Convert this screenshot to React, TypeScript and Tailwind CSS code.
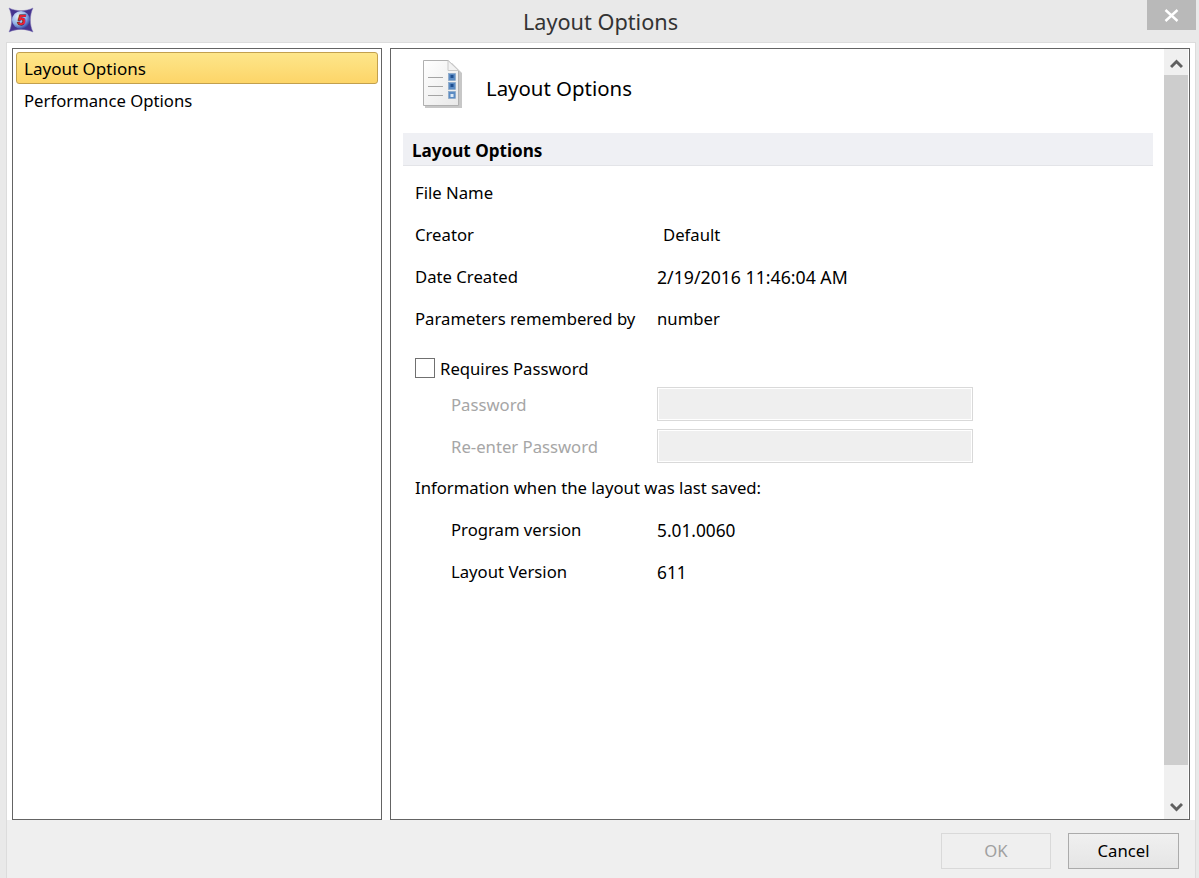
function Logo() {
  return (
    <svg width="26" height="26" viewBox="0 0 26 26" className="block">
      <defs>
        <radialGradient id="ball" cx="35%" cy="30%" r="75%">
          <stop offset="0%" stopColor="#e6eefa" />
          <stop offset="60%" stopColor="#8fb0e6" />
          <stop offset="100%" stopColor="#2f3a9c" />
        </radialGradient>
      </defs>
      <path d="M1 1 C8 4.5 18 4.5 25 1 C21.5 8 21.5 18 25 25 C18 21.5 8 21.5 1 25 C4.5 18 4.5 8 1 1Z" fill="#46348f" stroke="#7f74b4" strokeWidth="0.5" />
      <circle cx="13" cy="13" r="9" fill="url(#ball)" />
      <text x="13.5" y="18" textAnchor="middle" fontSize="14.5" fontWeight="700" fontStyle="italic" fill="#ea2230" stroke="#3a1028" strokeWidth="0.9" paintOrder="stroke" fontFamily="'Liberation Sans', sans-serif">5</text>
    </svg>
  );
}

function DocIcon() {
  return (
    <svg width="42" height="49" viewBox="0 0 42 49" className="block">
      <defs>
        <linearGradient id="page" x1="0" y1="0" x2="1" y2="1">
          <stop offset="0%" stopColor="#ffffff" />
          <stop offset="100%" stopColor="#e8e8e8" />
        </linearGradient>
      </defs>
      <path d="M3 3 H30 L40 13 V48 H3Z" fill="#b4b4b4" opacity="0.75" />
      <path d="M1.5 0.5 H26 L36.5 10.5 V45.5 H1.5Z" fill="url(#page)" stroke="#b0b0b0" />
      <path d="M26 0.5 V10.5 H36.5Z" fill="#f2f2f2" stroke="#c8c8c8" />
      <g stroke="#a4a4a4" strokeWidth="1">
        <line x1="6" y1="17.5" x2="21" y2="17.5" />
        <line x1="6" y1="26.5" x2="21" y2="26.5" />
        <line x1="6" y1="35.5" x2="21" y2="35.5" />
      </g>
      <g fill="#5c8cc4" stroke="#85a3c4" strokeWidth="0.6">
        <rect x="26.5" y="13.5" width="7" height="7" />
        <rect x="26.5" y="22.5" width="7" height="7" />
        <rect x="26.5" y="31.5" width="7" height="7" />
      </g>
      <g fill="#1f4f8f">
        <rect x="28.5" y="15" width="3" height="3" />
        <rect x="28.5" y="24" width="3" height="3" />
      </g>
      <rect x="28.5" y="34" width="3" height="3" fill="#dce8f4" />
    </svg>
  );
}

function CloseGlyph() {
  return (
    <svg width="15" height="13" viewBox="0 0 15 13" className="block">
      <path d="M1.5 1 L13.5 12 M13.5 1 L1.5 12" stroke="#ffffff" strokeWidth="2.4" fill="none" />
    </svg>
  );
}

function ScrollArrow({ up }: { up?: boolean }) {
  return (
    <svg width="13" height="10" viewBox="0 0 13 10" className="block">
      <path d={up ? "M1 8 L6.5 2.5 L12 8" : "M1 2 L6.5 7.5 L12 2"} stroke="#606060" strokeWidth="3" fill="none" />
    </svg>
  );
}

function Row({ label, value, indent, valueClass }: { label: string; value: string; indent?: boolean; valueClass?: string }) {
  return (
    <div className="flex h-[42px] items-center pt-[1px]">
      <div className={indent ? "w-[242px] pl-[36px]" : "w-[242px]"}>{label}</div>
      <div className={valueClass}>{value}</div>
    </div>
  );
}

function PasswordRow({ label }: { label: string }) {
  return (
    <div className="flex h-[42px] items-center text-[#a6a6a6]">
      <div className="w-[242px] pl-[36px] pt-[3px]">{label}</div>
      <div className="h-[34px] w-[316px] border border-[#d9d9d9] bg-white p-[1px]">
        <div className="h-full bg-[#efefef]"></div>
      </div>
    </div>
  );
}

export default function App() {
  return (
    <div className="flex h-[878px] w-[1199px] flex-col overflow-hidden bg-[#e9e9e9] font-['Noto_Sans',sans-serif] text-[16.7px] leading-none text-black">
      {/* title bar */}
      <div className="grid h-[42px] shrink-0 grid-cols-[1fr_auto_1fr]">
        <div className="pl-[8px] pt-[7px]">
          <Logo />
        </div>
        <div className="pl-[2px] pt-[11px] text-[21.7px] leading-[22px] text-[#333333]">Layout Options</div>
        <div className="flex justify-end pr-[3px]">
          <div className="flex h-[30px] w-[49px] items-center justify-center bg-[#b9b9b9]">
            <CloseGlyph />
          </div>
        </div>
      </div>

      <div className="ml-[6px] mr-[3px] flex flex-1 flex-col border-x border-t border-[#dcdcdc] bg-[#efefef]">
        <div className="flex h-[777px] gap-[8px] bg-white pl-[5px] pr-[5px] pt-[5px]">
          {/* left list */}
          <div className="w-[370px] border border-[#646464] p-[3px]">
            <div className="flex h-[32px] items-center rounded-[3px] border border-[#c2a04e] bg-gradient-to-b from-[#fde68a] to-[#fdd568] pl-[7px] pt-[2px] text-[17.05px]">
              Layout Options
            </div>
            <div className="flex h-[34px] items-center pl-[8px]">Performance Options</div>
          </div>

          {/* right pane */}
          <div className="flex w-[800px] border border-[#646464]">
            <div className="flex-1 pl-[12px] pr-[11px]">
              <div className="flex h-[84px] items-start pl-[19px] pt-[11px]">
                <DocIcon />
                <div className="ml-[22px] mt-[16px] text-[20.4px] leading-[24px]">Layout Options</div>
              </div>
              <div className="flex h-[33px] items-center border-b border-[#e3e4e8] bg-[#eff0f4] pl-[9px] pt-[3px] text-[17.1px] font-bold">
                Layout Options
              </div>
              <div className="mt-[6px] pl-[12px]">
                <Row label="File Name" value="" />
                <Row label="Creator" value="Default" valueClass="pl-[6px]" />
                <Row label="Date Created" value="2/19/2016 11:46:04 AM" valueClass="text-[17.7px]" />
                <Row label="Parameters remembered by" value="number" />
                <div className="mt-[12px] flex h-[31px] items-center">
                  <div className="h-[20px] w-[20px] border border-[#707070] bg-white"></div>
                  <div className="ml-[5px] pt-[4px]">Requires Password</div>
                </div>
                <PasswordRow label="Password" />
                <PasswordRow label="Re-enter Password" />
                <div className="flex h-[42px] items-center">Information when the layout was last saved:</div>
                <Row label="Program version" value="5.01.0060" indent valueClass="text-[17.3px]" />
                <Row label="Layout Version" value="611" indent valueClass="text-[17.3px]" />
              </div>
            </div>
            {/* scrollbar */}
            <div className="mr-[1px] flex w-[24px] flex-col bg-[#f0f0f0]">
              <div className="flex h-[26px] items-center justify-center pt-[3px]">
                <ScrollArrow up />
              </div>
              <div className="h-[690px] bg-[#cdcdcd]"></div>
              <div className="flex flex-1 items-end justify-center pb-[7px]">
                <ScrollArrow />
              </div>
            </div>
          </div>
        </div>

        {/* footer */}
        <div className="flex flex-1 justify-end gap-[17px] pr-[16px] pt-[13px]">
          <div className="flex h-[36px] w-[110px] items-center justify-center border border-[#d9d9d9] text-[#a0a0a0]">OK</div>
          <div className="flex h-[36px] w-[111px] items-center justify-center border border-[#ababab] bg-gradient-to-b from-[#f0f0f0] to-[#e5e5e5]">Cancel</div>
        </div>
      </div>
    </div>
  );
}
